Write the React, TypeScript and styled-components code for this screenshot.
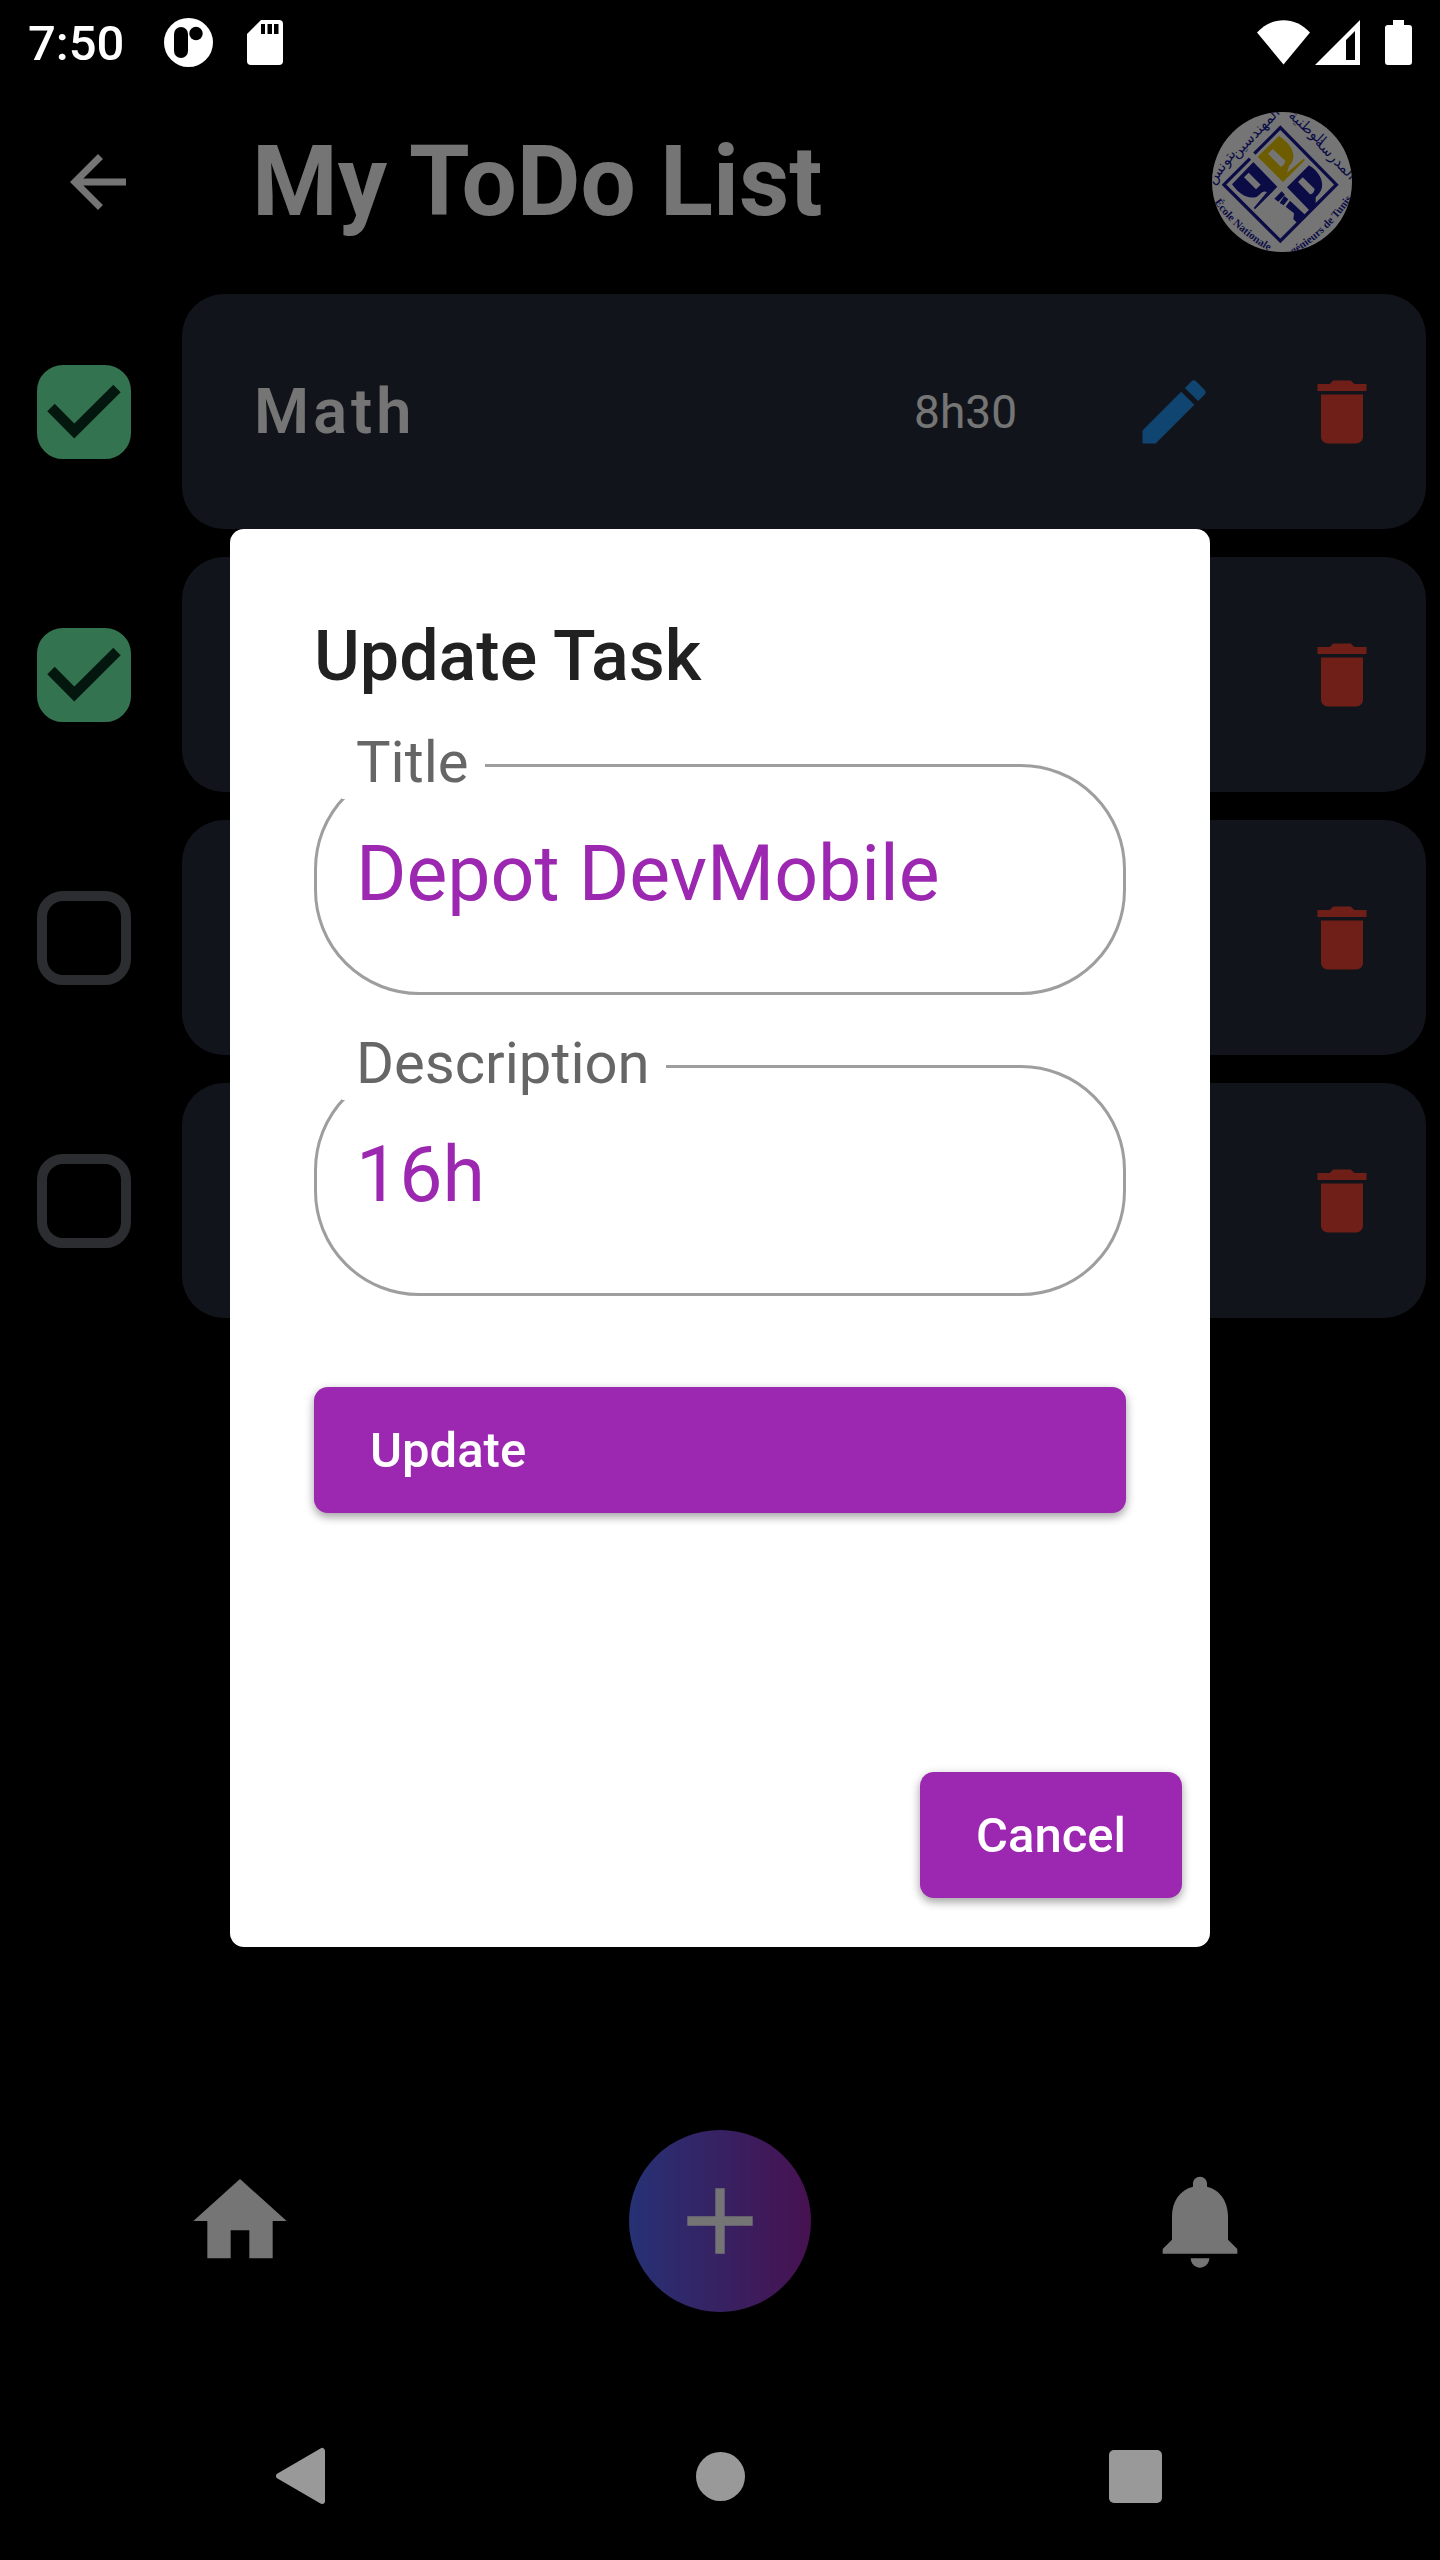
import React, { useState } from "react";
import styled, { createGlobalStyle } from "styled-components";

const GlobalStyle = createGlobalStyle`
  *, *::before, *::after { box-sizing: border-box; }
  body { margin: 0; background: #000; font-family: Roboto, "Liberation Sans", sans-serif; }
  button, input { font: inherit; }
`;

const Screen = styled.div`
  position: relative;
  display: flex;
  flex-direction: column;
  min-height: 100vh;
  background: #000;
  color: #fff;
`;

/* System status bar */
const StatusBar = styled.header`
  display: flex;
  align-items: center;
  justify-content: space-between;
  height: 84px;
  padding: 0 28px;
`;

const StatusGroup = styled.div<{ $gap: number }>`
  display: flex;
  align-items: center;
  gap: ${(p) => p.$gap}px;
`;

const Clock = styled.time`
  margin-right: 6px;
  padding-top: 4px;
  font-size: 49px;
  font-weight: 500;
  line-height: 58px;
`;

const Glyph = styled.svg`
  display: block;
  flex: none;
`;

/* App content */
const AppArea = styled.div`
  position: relative;
  display: flex;
  flex: 1;
  flex-direction: column;
`;

const AppBar = styled.div`
  display: flex;
  align-items: center;
  height: 196px;
  padding-right: 88px;
`;

const IconButton = styled.button<{ $width: number; $color: string }>`
  display: grid;
  place-items: center;
  flex: none;
  width: ${(p) => p.$width}px;
  height: 168px;
  padding: 0;
  border: 0;
  background: none;
  color: ${(p) => p.$color};
`;

const PageTitle = styled.h1`
  flex: 1;
  margin: 0 0 0 56px;
  font-size: 98px;
  font-weight: 700;
  line-height: 116px;
`;

const TaskList = styled.ul`
  display: flex;
  flex: 1;
  flex-direction: column;
  gap: 28px;
  margin: 0;
  padding: 14px 14px 0 37px;
  list-style: none;
`;

const TaskRow = styled.li`
  display: flex;
  align-items: center;
  gap: 51px;
`;

const CheckWrap = styled.label`
  display: grid;
  flex: none;
  width: 94px;
  height: 94px;

  > * {
    grid-area: 1 / 1;
  }
`;

const CheckInput = styled.input`
  appearance: none;
  width: 94px;
  height: 94px;
  margin: 0;
  border: 10px solid #606269;
  border-radius: 26px;

  &:checked {
    border-color: #6ffaac;
    background: #6ffaac;
  }
`;

const CheckMark = styled.svg`
  width: 94px;
  height: 94px;
  pointer-events: none;
`;

const TaskCard = styled.div`
  display: flex;
  flex: 1;
  align-items: center;
  justify-content: flex-end;
  height: 235px;
  border-radius: 42px;
  background: #272d3b;
`;

const TaskName = styled.span`
  flex: 1;
  padding-left: 72px;
  font-size: 63px;
  font-weight: 600;
  letter-spacing: 4px;
`;

const TaskTime = styled.span`
  padding-right: 73px;
  font-size: 46px;
`;

const BottomNav = styled.nav`
  display: grid;
  grid-template-columns: repeat(3, 1fr);
  align-items: center;
  justify-items: center;
  padding-bottom: 80px;
`;

const AddButton = styled.button`
  display: grid;
  place-items: center;
  width: 182px;
  height: 182px;
  padding: 0;
  border: 0;
  border-radius: 50%;
  background: linear-gradient(to right, #536dfe, #9c27b0);
  color: #fff;
`;

/* Modal layer over the app content */
const Scrim = styled.div`
  position: absolute;
  inset: 0;
  display: flex;
  align-items: center;
  justify-content: center;
  background: rgba(0, 0, 0, 0.54);
`;

const Dialog = styled.form`
  flex: 1;
  margin: 0 230px;
  border-radius: 14px;
  background: #fff;
`;

const DialogBody = styled.div`
  padding: 84px 84px 0;
`;

const DialogTitle = styled.h2`
  margin: 0 0 32px;
  color: #212121;
  font-size: 70px;
  font-weight: 500;
  line-height: 86px;
`;

const Field = styled.fieldset`
  min-width: 0;
  margin: 0 0 37px;
  padding: 0 25px;
  border: 3px solid #9e9e9e;
  border-radius: 105px;
`;

const FieldLegend = styled.legend`
  padding: 0 16px 6px 14px;
  color: #666;
  font-size: 58px;
  line-height: 62px;
`;

const FieldInput = styled.input`
  display: block;
  width: 100%;
  height: 193px;
  padding: 30px 14px 73px;
  border: 0;
  outline: 0;
  background: transparent;
  color: #9c27b0;
  font-size: 77px;
  line-height: 90px;
`;

const RaisedButton = styled.button`
  height: 126px;
  padding: 0 56px;
  border: 0;
  border-radius: 14px;
  background: #9c27b0;
  box-shadow: 0 4px 8px rgba(0, 0, 0, 0.32), 0 2px 14px rgba(0, 0, 0, 0.08);
  color: #fff;
  font-size: 49px;
  font-weight: 500;
  text-align: left;
`;

const SubmitButton = styled(RaisedButton)`
  display: block;
  width: 100%;
  margin-top: 91px;
`;

const DialogActions = styled.div`
  display: flex;
  justify-content: flex-end;
  padding: 259px 28px 49px;
`;

/* System navigation bar */
const SystemNav = styled.nav`
  display: flex;
  align-items: center;
  justify-content: center;
  height: 168px;
`;

const SystemButton = styled.button`
  display: grid;
  place-items: center;
  width: 415px;
  height: 168px;
  padding: 0;
  border: 0;
  background: none;
  color: #999;
`;

type MaterialIconProps = { d: string; size: number };

function MaterialIcon({ d, size }: MaterialIconProps) {
  return (
    <Glyph width={size} height={size} viewBox="0 0 24 24" fill="currentColor" aria-hidden="true">
      <path d={d} />
    </Glyph>
  );
}

const icons = {
  back: "M20 11H7.83l5.59-5.59L12 4l-8 8 8 8 1.41-1.41L7.83 13H20v-2z",
  edit: "M3 17.25V21h3.75L17.81 9.94l-3.75-3.75L3 17.25zM20.71 7.04a.996.996 0 0 0 0-1.41l-2.34-2.34a.996.996 0 0 0-1.41 0l-1.83 1.83 3.75 3.75 1.83-1.83z",
  trash: "M6 19c0 1.1.9 2 2 2h8c1.1 0 2-.9 2-2V7H6v12zM19 4h-3.5l-1-1h-5l-1 1H5v2h14V4z",
  home: "M10 20v-6h4v6h5v-8h3L12 3 2 12h3v8z",
  add: "M19 13h-6v6h-2v-6H5v-2h6V5h2v6h6v2z",
  bell: "M12 22c1.1 0 2-.9 2-2h-4c0 1.1.89 2 2 2zm6-6v-5c0-3.07-1.64-5.64-4.5-6.32V4c0-.83-.67-1.5-1.5-1.5s-1.5.67-1.5 1.5v.68C7.63 5.36 6 7.92 6 11v5l-2 2v1h16v-1l-2-2z",
};

function SchoolLogo() {
  return (
    <Glyph width="140" height="140" viewBox="97 66 420 420" role="img" aria-label="École Nationale d'Ingénieurs de Tunis">
      <defs>
        <clipPath id="logo-disc">
          <circle cx="307" cy="276" r="210" />
        </clipPath>
        <path id="logo-left" d="M104 336 Q165 428 300 502" />
        <path id="logo-right" d="M340 494 Q452 430 542 290" />
      </defs>
      <g clipPath="url(#logo-disc)">
        <rect x="97" y="66" width="420" height="420" fill="#fff" />
        <path d="M224 191 302 113 470 284 302 453 133 284 211 206" fill="none" stroke="#181c98" strokeWidth="10" />
        <path d="M234 200 298 138C330 160 344 182 341 205 340 215 334 222 328 228L322 248 372 206 376 210 310 276Z" fill="#f0c800" />
        <path d="M265 191 279 177 317 212C315 222 310 228 303 230Z" fill="#fff" />
        <path d="M157 283 221 216 293 290 272 312 226 358 222 354 262 306C248 300 244 312 232 320 205 330 178 312 157 283Z" fill="#181c98" />
        <path d="M193 262 207 248 243 284 229 298Z" fill="#fff" />
        <path d="M388 226C420 246 430 272 427 292 424 306 416 314 408 322L408 340 430 322 432 326 394 366 322 292Z" fill="#181c98" />
        <path d="M355 276 369 262 405 297C403 307 398 313 391 313Z" fill="#fff" />
        <path d="M284 326 306 304 316 314 296 335ZM300 339 314 318 326 328 312 346ZM318 350 331 332 381 379 357 403 341 388 343 370Z" fill="#181c98" />
        <g fill="#181c98" fontFamily='"Liberation Serif", serif' fontSize="33" fontWeight="700">
          <text><textPath href="#logo-left">École Nationale</textPath></text>
          <text><textPath href="#logo-right">génieurs de Tunis</textPath></text>
        </g>
        <g fill="#181c98" fontFamily='"DejaVu Sans", sans-serif' fontSize="44" textAnchor="middle" direction="rtl">
          <text transform="translate(374 124) rotate(42)">الوطنية</text>
          <text transform="translate(458 216) rotate(46)">المدرسة</text>
          <text transform="translate(236 138) rotate(-46)">المهندسين</text>
          <text transform="translate(136 238) rotate(-54)">بتونس</text>
        </g>
      </g>
    </Glyph>
  );
}

type Task = { id: number; name?: string; time?: string; done: boolean };

const initialTasks: Task[] = [
  { id: 1, name: "Math", time: "8h30", done: true },
  { id: 2, done: true },
  { id: 3, done: false },
  { id: 4, done: false },
];

export default function App() {
  const [tasks, setTasks] = useState(initialTasks);
  const [title, setTitle] = useState("Depot DevMobile");
  const [description, setDescription] = useState("16h");

  const toggle = (id: number) =>
    setTasks((all) => all.map((t) => (t.id === id ? { ...t, done: !t.done } : t)));

  return (
    <Screen>
      <GlobalStyle />
      <StatusBar>
        <StatusGroup $gap={34}>
          <Clock>7:50</Clock>
          <Glyph width="49" height="49" viewBox="0 0 49 49" aria-hidden="true">
            <circle cx="24.5" cy="24.5" r="24.5" fill="#fff" />
            <rect x="10" y="9" width="14" height="31" rx="7" fill="#000" />
            <circle cx="32" cy="15.5" r="6.7" fill="#000" />
          </Glyph>
          <Glyph width="36" height="45" viewBox="0 0 36 45" aria-hidden="true">
            <path d="M14 0H32a4 4 0 0 1 4 4V41a4 4 0 0 1-4 4H4a4 4 0 0 1-4-4V14Z" fill="#fff" />
            <path d="M14 4h4v10h-4zM20.500 4h4.500v10h-4.500zM27 4h4.500v10H27z" fill="#000" />
          </Glyph>
        </StatusGroup>
        <StatusGroup $gap={5}>
          <Glyph width="53" height="45" viewBox="0 0 53 45" aria-hidden="true">
            <path d="M26.500 44.500 0 12.500C15-4 38-4 53 12.500Z" fill="#fff" />
          </Glyph>
          <Glyph width="45" height="45" viewBox="0 0 45 45" aria-hidden="true">
            <path d="M45 0V45H0ZM40 11 31 20V40H40Z" fill="#fff" fillRule="evenodd" />
          </Glyph>
          <Glyph width="47" height="45" viewBox="0 0 47 45" aria-hidden="true">
            <path d="M28 0H39V5H44a3 3 0 0 1 3 3V42a3 3 0 0 1-3 3H23a3 3 0 0 1-3-3V8a3 3 0 0 1 3-3H28Z" fill="#fff" />
          </Glyph>
        </StatusGroup>
      </StatusBar>

      <AppArea>
        <AppBar>
          <IconButton type="button" $width={196} $color="#fff" aria-label="Back">
            <MaterialIcon d={icons.back} size={84} />
          </IconButton>
          <PageTitle>My ToDo List</PageTitle>
          <SchoolLogo />
        </AppBar>

        <TaskList>
          {tasks.map((task) => (
            <TaskRow key={task.id}>
              <CheckWrap aria-label="Done">
                <CheckInput type="checkbox" checked={task.done} onChange={() => toggle(task.id)} />
                {task.done && (
                  <CheckMark viewBox="0 0 94 94" aria-hidden="true">
                    <path d="M14 42.500 37.300 66 80 23.500" fill="none" stroke="#093421" strokeWidth="10.500" />
                  </CheckMark>
                )}
              </CheckWrap>
              <TaskCard>
                {task.name && <TaskName>{task.name}</TaskName>}
                {task.time && <TaskTime>{task.time}</TaskTime>}
                <IconButton type="button" $width={168} $color="#2196f3" aria-label="Edit">
                  <MaterialIcon d={icons.edit} size={84} />
                </IconButton>
                <IconButton type="button" $width={168} $color="#f44336" aria-label="Delete">
                  <MaterialIcon d={icons.trash} size={84} />
                </IconButton>
              </TaskCard>
            </TaskRow>
          ))}
        </TaskList>

        <BottomNav>
          <IconButton type="button" $width={168} $color="#fff" aria-label="Home">
            <MaterialIcon d={icons.home} size={112} />
          </IconButton>
          <AddButton type="button" aria-label="Add task">
            <MaterialIcon d={icons.add} size={112} />
          </AddButton>
          <IconButton type="button" $width={168} $color="#fff" aria-label="Notifications">
            <MaterialIcon d={icons.bell} size={112} />
          </IconButton>
        </BottomNav>

        <Scrim>
          <Dialog role="dialog" aria-labelledby="dialog-title" onSubmit={(e: React.FormEvent) => e.preventDefault()}>
            <DialogBody>
              <DialogTitle id="dialog-title">Update Task</DialogTitle>
              <Field>
                <FieldLegend>
                  <label htmlFor="task-title">Title</label>
                </FieldLegend>
                <FieldInput id="task-title" value={title} onChange={(e) => setTitle(e.target.value)} />
              </Field>
              <Field>
                <FieldLegend>
                  <label htmlFor="task-description">Description</label>
                </FieldLegend>
                <FieldInput id="task-description" value={description} onChange={(e) => setDescription(e.target.value)} />
              </Field>
              <SubmitButton type="submit">Update</SubmitButton>
            </DialogBody>
            <DialogActions>
              <RaisedButton type="button">Cancel</RaisedButton>
            </DialogActions>
          </Dialog>
        </Scrim>
      </AppArea>

      <SystemNav>
        <SystemButton type="button" aria-label="System back">
          <Glyph width="58" height="58" viewBox="0 0 58 58" aria-hidden="true">
            <path d="M46 4V54L3 29Z" fill="currentColor" stroke="currentColor" strokeWidth="6" strokeLinejoin="round" />
          </Glyph>
        </SystemButton>
        <SystemButton type="button" aria-label="System home">
          <Glyph width="49" height="49" viewBox="0 0 49 49" aria-hidden="true">
            <circle cx="24.5" cy="24.5" r="24.5" fill="currentColor" />
          </Glyph>
        </SystemButton>
        <SystemButton type="button" aria-label="Recent apps">
          <Glyph width="53" height="53" viewBox="0 0 53 53" aria-hidden="true">
            <rect width="53" height="53" rx="5" fill="currentColor" />
          </Glyph>
        </SystemButton>
      </SystemNav>
    </Screen>
  );
}
